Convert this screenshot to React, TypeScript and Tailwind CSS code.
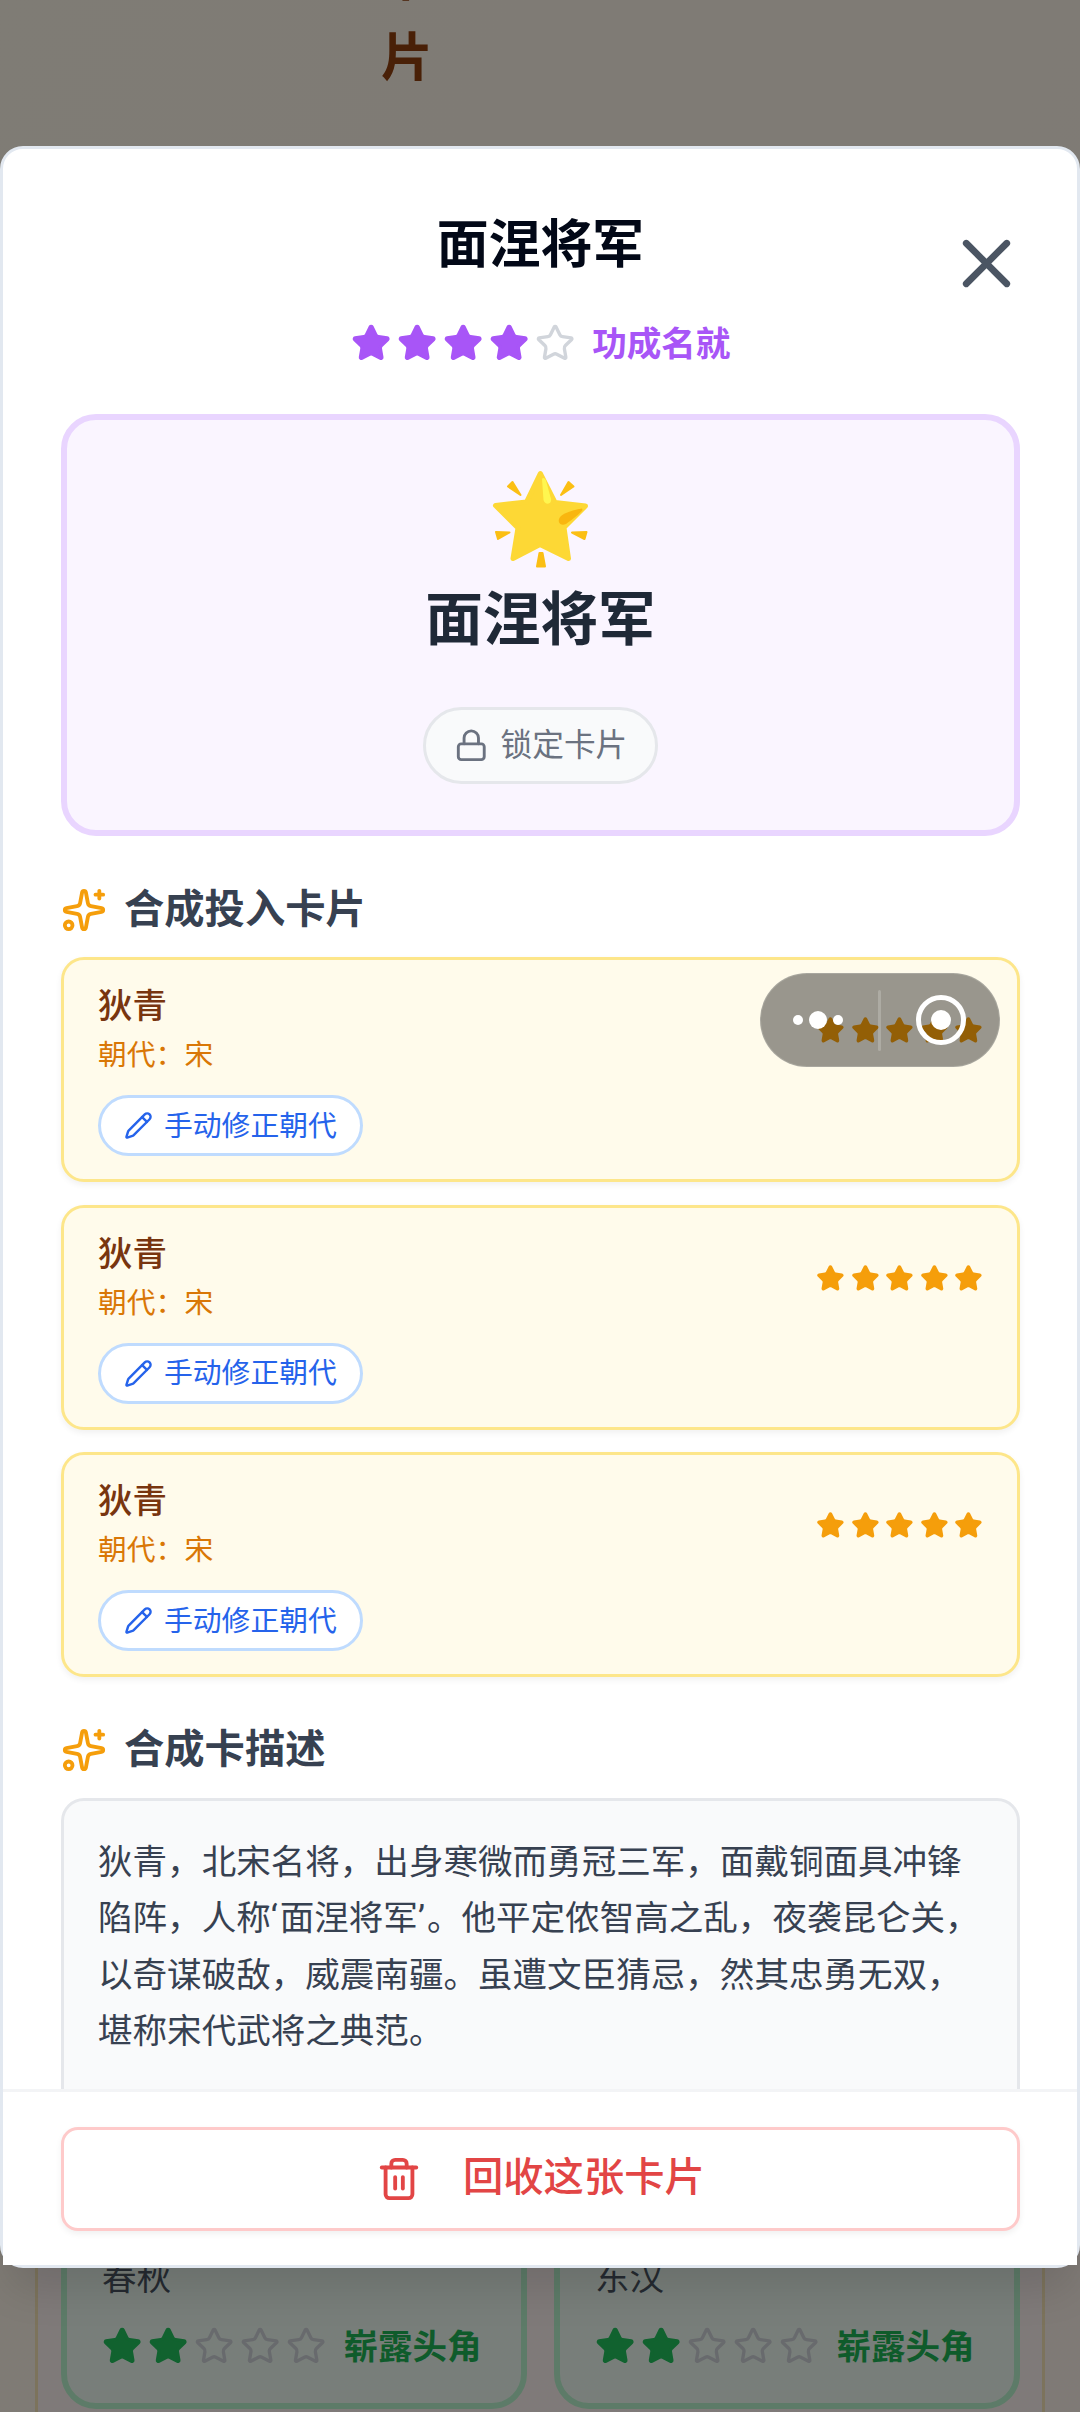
import { Star, X, Lock, Sparkles, Pencil, Trash2 } from "lucide-react";

const FONT = "font-['Noto_Sans_CJK_SC',sans-serif]";

type Tone = "purple" | "green" | "amber";

const TONES: Record<Tone, string> = {
  purple: "fill-[#a855f7] text-[#a855f7]",
  green: "fill-[#22c55e] text-[#22c55e]",
  amber: "fill-[#f59e0b] text-[#f59e0b]",
};

function Stars({ count, tone, size, box }: { count: number; tone: Tone; size: number; box: string }) {
  return (
    <div className={box}>
      {[0, 1, 2, 3, 4].map((i) => (
        <Star key={i} size={size} strokeWidth={2} className={i < count ? TONES[tone] : "text-[#d1d5db]"} />
      ))}
    </div>
  );
}

function GlowingStar() {
  return (
    <svg viewBox="0 0 160 130" className="h-[130px] w-[160px]">
      <g fill="#fbbf14" stroke="#fbbf14" strokeWidth="2" strokeLinejoin="round">
        <path d="M48 36.500L52.500 32l8 13z" />
        <path d="M108.500 32l5 4.500L101 45z" />
        <path d="M36 82l13.500.5L38 89z" />
        <path d="M112 82.500l14.500-.5-2 7z" />
        <path d="M79.500 103h3l2.500 13.500h-8z" />
      </g>
      <path
        d="M80.300 23.500L95 52.500l30.500 3.500L104 77.500l4.500 31L80 94.500l-27 14L58 78 35.500 55.500 66.500 52z"
        fill="#fdd835"
        stroke="#fdd835"
        strokeWidth="5"
        strokeLinejoin="round"
      />
      <path d="M82 29c1-2 3-1 4 1.500L91 49c1 6-6.500 6-7.500 1z" fill="#fff64f" />
      <path d="M122 58.500C114 60 105 62.500 101 66c-5 5-1 11 5 8 7-5 14-10.500 16.500-14z" fill="#f9b60f" />
    </svg>
  );
}

function SectionTitle({ children }: { children: string }) {
  return (
    <div className="flex h-[58px] items-center gap-[17px]">
      <Sparkles size={46} strokeWidth={2} className="text-[#f59e0b]" />
      <h3 className="-mt-[8px] text-[40.3px] leading-[58px] font-bold text-[#374151]">{children}</h3>
    </div>
  );
}

function MaterialCard() {
  return (
    <div className="flex h-[225px] items-start justify-between rounded-[23px] border-[3px] border-[#fde68a] bg-[#fffbeb] px-[34px] pt-[17px] shadow-[0_3px_6px_rgba(0,0,0,0.06)]">
      <div className="flex flex-col items-start">
        <div className="h-[53px] text-[34.56px] leading-[52px] font-medium text-[#78350f]">狄青</div>
        <div className="h-[46px] text-[28.8px] leading-[46px] text-[#d97706]">朝代：宋</div>
        <button className="mt-[19px] flex h-[61px] w-[265px] items-center gap-[11px] rounded-full border-[3px] border-[#bfdbfe] bg-white pl-[23px] text-[28.8px] leading-[40px] text-[#2563eb]">
          <Pencil size={29} strokeWidth={2} />
          <span className="-mt-[4px]">手动修正朝代</span>
        </button>
      </div>
      <Stars count={5} tone="amber" size={28.8} box="mt-[39px] flex gap-[5.76px]" />
    </div>
  );
}

function Quote({ children }: { children: string }) {
  return <span className="inline-block h-[40px] w-[9px] align-baseline font-[Roboto,sans-serif] leading-[40px]">{children}</span>;
}

function CollectionCard({ dynasty }: { dynasty: string }) {
  return (
    <div className="flex h-full w-[466px] flex-col rounded-[35px] border-[6px] border-[#bbf7d0] bg-[#f0fdf4] px-[35px]">
      <div className="mt-[223px] h-[52px] shrink-0 text-[34.56px] leading-[52px] text-[#4b5563]">{dynasty}</div>
      <div className="mt-[19px] flex h-[52px] shrink-0 items-center">
        <Stars count={2} tone="green" size={40.3} box="flex gap-[5.76px]" />
        <span className="-mt-1 ml-[17px] text-[34.56px] leading-[52px] font-bold whitespace-nowrap text-[#1fb757]">崭露头角</span>
      </div>
    </div>
  );
}

function Backdrop() {
  return (
    <div className="flex h-full flex-col bg-linear-to-br from-[#fff8ea] to-[#fff4ec]">
      <div className="flex h-[146px] shrink-0 flex-col overflow-hidden pl-[381px]">
        <h1 className="-mt-[66px] w-[52px] text-[51.84px] leading-[80px] font-bold text-[#92400e]">卡片</h1>
      </div>
      <div className="mx-[35px] mt-[1874px] flex h-[392px] shrink-0 justify-between border-x-[3px] border-[#f8e6b8] bg-[#fff5f2] pr-[22px] pl-[23px]">
        <div className="flex h-[389px] w-full justify-between">
          <CollectionCard dynasty="春秋" />
          <CollectionCard dynasty="东汉" />
        </div>
      </div>
    </div>
  );
}

function SystemCapsule() {
  return (
    <div className="absolute top-[973px] left-[760px] flex h-[94px] w-[240px] items-center rounded-full border border-white/15 bg-black/40">
      <div className="flex w-[117px] items-center justify-center gap-[6px] pr-[3px]">
        <span className="size-[10px] rounded-full bg-white" />
        <span className="size-[18px] rounded-full bg-white" />
        <span className="size-[10px] rounded-full bg-white" />
      </div>
      <span className="h-[61px] w-[3px] rounded-full bg-white/20" />
      <div className="ml-[35px] flex size-[50px] items-center justify-center rounded-full border-[5px] border-white">
        <span className="size-[20px] rounded-full bg-white" />
      </div>
    </div>
  );
}

export default function App() {
  return (
    <div className={`relative h-[2412px] w-[1080px] overflow-hidden ${FONT}`} lang="zh-CN">
      <Backdrop />
      <div className="absolute inset-0 bg-black/50 pt-[146px]">
        <div className="relative flex h-[2122px] flex-col rounded-[23px] border-[3px] border-[#e2e8f0] bg-white shadow-[0_29px_43px_-9px_rgba(0,0,0,0.12)]">
          <div className="flex h-[1940px] flex-col overflow-hidden pr-[57px] pl-[58px]">
            <h2 className="mt-[54px] shrink-0 text-center text-[51.84px] leading-[76px] font-bold text-[#020817]">面涅将军</h2>
            <div className="mt-[38px] flex h-[52px] shrink-0 items-center justify-center">
              <Stars count={4} tone="purple" size={40.3} box="flex gap-[5.76px]" />
              <span className="-mt-1 ml-[17px] text-[34.56px] leading-[52px] font-bold text-[#a855f7]">功成名就</span>
            </div>
            <div className="mt-[45px] flex h-[422px] shrink-0 flex-col items-center rounded-[35px] border-[6px] border-[#e9d5ff] bg-[#faf5ff]">
              <div className="mt-[30px] h-[130px] pr-[2px]">
                <GlowingStar />
              </div>
              <div className="-mt-[7px] h-[84px] text-[57.6px] leading-[84px] font-bold text-[#1f2937]">面涅将军</div>
              <button className="mt-[50px] flex h-[77px] w-[235px] items-center gap-[12px] rounded-full border-[3px] border-[#e5e7eb] bg-[#f9fafb] pl-[28px] text-[31.68px] leading-[46px] text-[#6b7280]">
                <Lock size={34.56} strokeWidth={2} />
                <span className="-mt-[7px]">锁定卡片</span>
              </button>
            </div>
            <div className="mt-[45px] shrink-0">
              <SectionTitle>合成投入卡片</SectionTitle>
            </div>
            <div className="mt-[18px] flex shrink-0 flex-col gap-[22.6px]">
              <MaterialCard />
              <MaterialCard />
              <MaterialCard />
            </div>
            <div className="mt-[44px] shrink-0">
              <SectionTitle>合成卡描述</SectionTitle>
            </div>
            <div className="mt-[19px] h-[400px] shrink-0 rounded-[23px] border-[3px] border-[#e5e7eb] bg-[#f9fafb] px-[34px] pt-[30px] text-[34.56px] leading-[56.16px] whitespace-nowrap text-[#374151]">
              <p className="h-[56.16px]">狄青，北宋名将，出身寒微而勇冠三军，面戴铜面具冲锋</p>
              <p className="h-[56.16px]">
                陷阵，人称<Quote>‘</Quote>面涅将军<Quote>’</Quote>。他平定侬智高之乱，夜袭昆仑关，
              </p>
              <p className="h-[56.16px]">以奇谋破敌，威震南疆。虽遭文臣猜忌，然其忠勇无双，</p>
              <p className="h-[56.16px]">堪称宋代武将之典范。</p>
            </div>
          </div>
          <div className="h-[176px] shrink-0 border-t-[3px] border-[#f3f4f6] bg-white pt-[35px] pr-[57px] pl-[58px]">
            <button className="flex h-[104px] w-full items-center rounded-[17px] border-[3px] border-[#fecaca] bg-white pl-[312px] text-[40.3px] leading-[58px] font-medium text-[#e24545] shadow-[0_3px_6px_rgba(0,0,0,0.06)]">
              <Trash2 size={46} strokeWidth={2} />
              <span className="-mt-[10px] ml-[41px]">回收这张卡片</span>
            </button>
          </div>
          <button className="absolute top-[74px] right-[50px]" aria-label="关闭">
            <X size={81} strokeWidth={2} className="text-[#4b5563]" />
          </button>
        </div>
      </div>
      <SystemCapsule />
    </div>
  );
}
